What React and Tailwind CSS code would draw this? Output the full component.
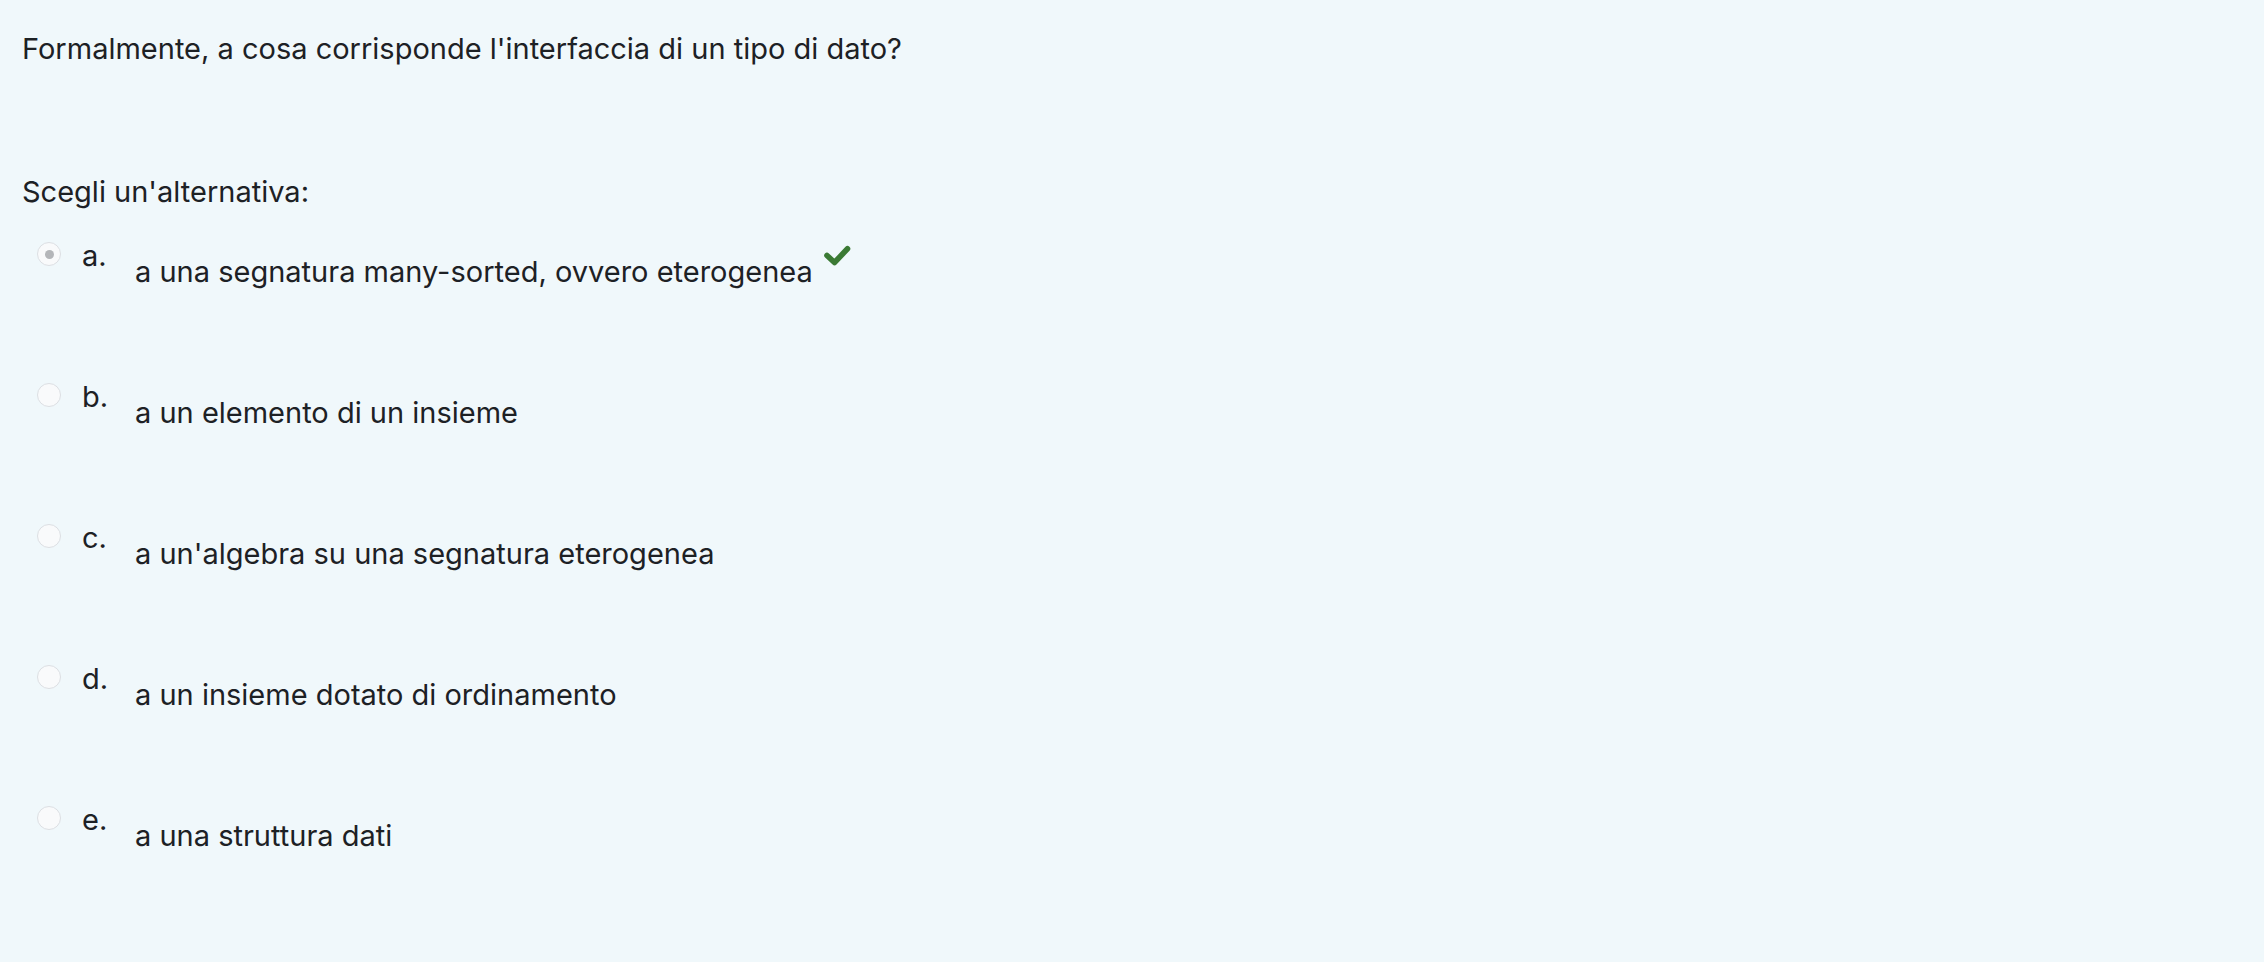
const options = [
  { key: "a", text: "a una segnatura many-sorted, ovvero eterogenea", checked: true, correct: true },
  { key: "b", text: "a un elemento di un insieme" },
  { key: "c", text: "a un'algebra su una segnatura eterogenea" },
  { key: "d", text: "a un insieme dotato di ordinamento" },
  { key: "e", text: "a una struttura dati" },
];

function Radio({ checked }) {
  return (
    <span className="mt-[7px] ml-[15px] flex h-6 w-6 shrink-0 items-center justify-center rounded-full border border-[#dcdfe3] bg-[#f9fafb]">
      {checked && <span className="h-[9px] w-[9px] rounded-full bg-[#b4b6b9]" />}
    </span>
  );
}

// green tick shown next to the correct answer
function Tick() {
  return (
    <svg viewBox="0 0 28 21" className="ml-[10px] mt-[-6px] h-[21px] w-[28px] shrink-0">
      <polyline
        points="4,10.5 11.5,17.5 24.5,3.8"
        fill="none"
        stroke="#3b7a34"
        strokeWidth="5.6"
        strokeLinecap="round"
        strokeLinejoin="round"
      />
    </svg>
  );
}

export default function App() {
  return (
    <div className="min-h-screen bg-[#f0f8fb] pl-[22px] pt-[28px] text-[29px] leading-[42px] text-[#1d2125] font-['Inter','Liberation_Sans',sans-serif]">
      <p>Formalmente, a cosa corrisponde l'interfaccia di un tipo di dato?</p>

      <p className="mt-[101px]">Scegli un'alternativa:</p>

      <div className="mt-[22px] flex flex-col gap-[83px]">
        {options.map((o) => (
          <div key={o.key} className="flex items-start">
            <Radio checked={o.checked} />
            <span className="ml-[21px] w-[53px] shrink-0">{o.key}.</span>
            <div className="flex items-start pt-[16px]">
              <span>{o.text}</span>
              {o.correct && <Tick />}
            </div>
          </div>
        ))}
      </div>
    </div>
  );
}
